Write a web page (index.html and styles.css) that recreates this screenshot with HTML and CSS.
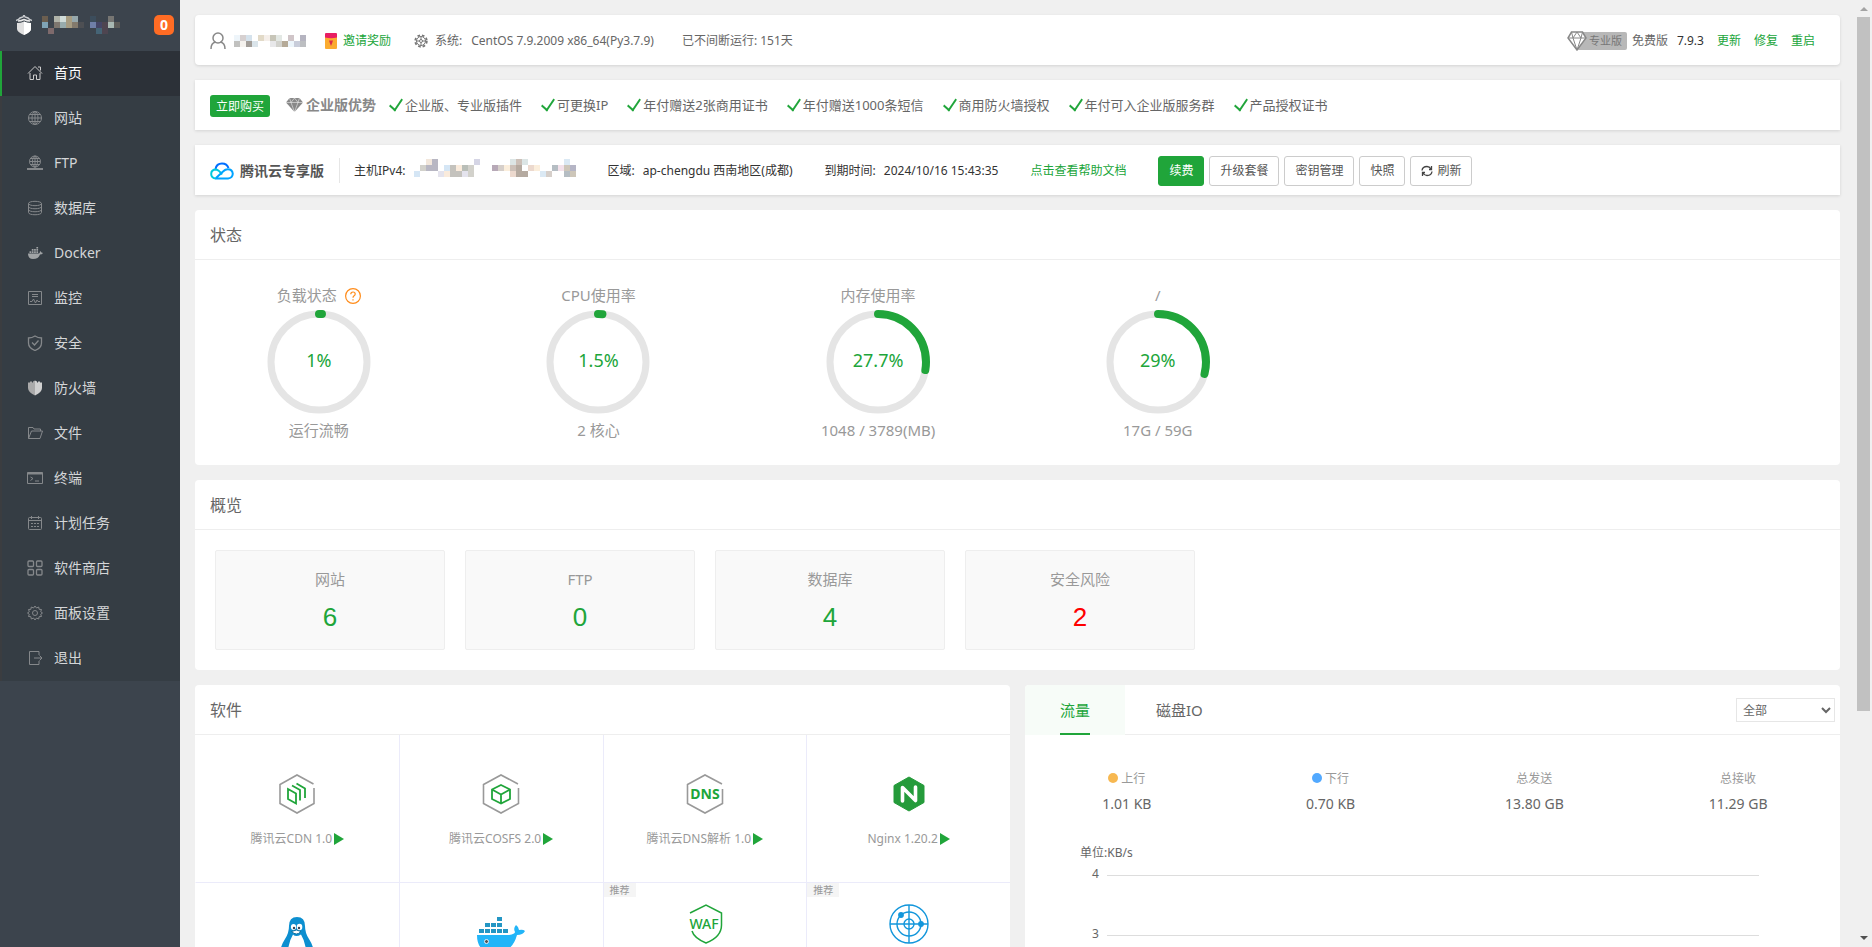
FILE: index.html
```html
<!DOCTYPE html>
<html lang="zh-CN">
  <head>
    <meta charset="utf-8" />
    <meta name="viewport" content="width=device-width, initial-scale=1" />
    <link rel="stylesheet" href="styles.css">
    <title>首页</title>
  </head>
  <body>
    <nav class="sidebar">
      <div class="sidebar-head">
        <svg class="logo" width="16" height="20" viewBox="0 0 16 20">
          <path d="M0 5.500Q3 4.500 4 3L7 2l1-2 1 2 3 1q1 1.500 4 2.500" fill="none" stroke="#c8cbce" stroke-width="1.500" />
          <path d="M2 6Q5 6 8 4.500 11 6 14 6" fill="none" stroke="#e8e8e8" stroke-width="1.500" />
          <path d="M1 8q4 0 7-1.500Q11 8 15 8v6q0 3-7 6-7-3-7-6z" fill="#e0e0e0" />
          <path d="M8 6.500Q11 8 15 8v6q0 3-7 6z" fill="#fff" />
        </svg>
        <svg class="mosaic" width="78" height="18" viewBox="0 0 78 18" shape-rendering="crispEdges">
          <path d="M0 0h6v6H0z" fill="#6b5e4f" />
          <path d="M0 6h6v6H0z" fill="#7fa3b5" />
          <path d="M6 12h6v6H6z" fill="#7e6a6c" />
          <path d="M12 0h6v6h-6z" fill="#b0b3a9" />
          <path d="M18 0h6v6h-6z" fill="#d0dcd9" />
          <path d="M24 0h6v12h-6z" fill="#a69c82" />
          <path d="M30 0h6v6h-6z" fill="#95a7ab" />
          <path d="M12 6h6v6h-6z" fill="#7d766f" />
          <path d="M18 6h6v6h-6z" fill="#98acad" />
          <path d="M30 6h6v6h-6z" fill="#837a6c" />
          <path d="M36 6h6v6h-6z" fill="#4d4f53" />
          <path d="M48 0h6v6h-6z" fill="#3c4d5c" />
          <path d="M48 6h6v6h-6z" fill="#6f7fa8" />
          <path d="M54 6h6v6h-6z" fill="#444566" />
          <path d="M54 12h6v6h-6z" fill="#456476" />
          <path d="M60 6h6v12h-6z" fill="#4e4550" />
          <path d="M66 0h6v6h-6z" fill="#777673" />
          <path d="M66 6h6v6h-6z" fill="#a9b9b3" />
          <path d="M72 6h6v6h-6z" fill="#5d5c59" />
        </svg>
        <span class="msg-count">0</span>
      </div>
      <ul class="menu">
        <li>
          <a class="active" href="#">
            <svg viewBox="0 0 16 16"><path d="M1 8.500 8 1.500l7 7M3 8v6.500h3.500V10h3v4.500H13V8M11 2h2.500v3.500" /></svg>
            首页
          </a>
        </li>
        <li>
          <a href="#">
            <svg viewBox="0 0 16 16"><circle cx="8" cy="8" r="6.500" /><ellipse cx="8" cy="8" rx="3" ry="6.500" /><path d="M8 1.500v13M1.500 8h13M2.500 4.500h11M2.500 11.500h11" /></svg>
            网站
          </a>
        </li>
        <li>
          <a href="#">
            <svg viewBox="0 0 16 16"><circle cx="8" cy="6.500" r="5.500" /><ellipse cx="8" cy="6.500" rx="2.500" ry="5.500" /><path d="M8 1v13M2.500 6.500h11M3.500 3.500h9M3.500 9.500h9" /><path d="M0 14h16M6 14h4" stroke-width="2" /></svg>
            FTP
          </a>
        </li>
        <li>
          <a href="#">
            <svg viewBox="0 0 16 16"><ellipse cx="8" cy="3.500" rx="6.500" ry="2.200" /><path d="M1.500 3.500v9c0 3 13 3 13 0v-9M1.500 6.500c0 3 13 3 13 0M1.500 9.500c0 3 13 3 13 0" /></svg>
            数据库
          </a>
        </li>
        <li>
          <a href="#">
            <svg class="solid" viewBox="0 0 16 16"><path d="M1 8.500h11q1-.500 1-2.500 1.200.500 1.500 1.500 1 0 1.500.500-1 1.500-3 1.500-1.500 4.500-7 4.500Q1 14 1 8.500zM2.500 6.300h1.700V8H2.500zM4.800 6.300h1.700V8H4.800zM7.100 6.300h1.700V8H7.100zM9.400 6.300h1.700V8H9.400zM4.800 4.100h1.700v1.600H4.800zM7.100 4.100h1.700v1.600H7.100zM9.400 4.100h1.700v1.600H9.400zM9.400 2h1.700v1.500H9.400z" /></svg>
            Docker
          </a>
        </li>
        <li>
          <a href="#">
            <svg viewBox="0 0 16 16"><path d="M1.500 1.500h13v13h-13zM5 4.500h6M5 6.500h6M3 11.500h2l1.500-2.500 2 4 1.500-3 1 1.500h2" /></svg>
            监控
          </a>
        </li>
        <li>
          <a href="#">
            <svg viewBox="0 0 16 16"><path d="M8 1q3 2 6.500 2v5q0 5-6.500 7.500Q1.500 13 1.500 8V3Q5 3 8 1zM5 7.500 7.500 10l4-4.500" stroke-width="1.300" /></svg>
            安全
          </a>
        </li>
        <li>
          <a href="#">
            <svg class="solid" viewBox="0 0 16 16"><path d="M1 2.500h2v-1h2v1h1v-1l2-1v15Q1 12 1 8z" fill="#aaa" /><path d="m8 .500 2 1v1h1v-1h2v1h2V8q0 4-7 7.500z" fill="#d0d0d0" /></svg>
            防火墙
          </a>
        </li>
        <li>
          <a href="#">
            <svg viewBox="0 0 16 16"><path d="M1.500 13.500v-11H6l1 1.500h6.500v2M1.500 13.500l3-7.500h11l-2.500 7.500z" /></svg>
            文件
          </a>
        </li>
        <li>
          <a href="#">
            <svg viewBox="0 0 16 16"><path d="M.500 2.500h15v11H.500zM3.500 7l2.500 1.500L3.500 10.500M8 11h4" /><path d="M.500 3.500h15" stroke-width="2" /></svg>
            终端
          </a>
        </li>
        <li>
          <a href="#">
            <svg viewBox="0 0 16 16"><rect x="1.500" y="2.500" width="13" height="12" rx="1" /><path d="M1.500 5.500h13M4.500 1v3M11.500 1v3M4 8.500h2M7 8.500h2M10 8.500h2M4 11.500h2M7 11.500h2M10 11.500h2" /></svg>
            计划任务
          </a>
        </li>
        <li>
          <a href="#">
            <svg viewBox="0 0 16 16" stroke-width="1.300"><rect x="1" y="1" width="5.500" height="5.500" rx="1" /><rect x="9.500" y="1" width="5.500" height="5.500" rx="1" /><rect x="1" y="9.500" width="5.500" height="5.500" rx="1" /><rect x="9.500" y="9.500" width="5.500" height="5.500" rx="1" /></svg>
            软件商店
          </a>
        </li>
        <li>
          <a href="#">
            <svg viewBox="0 0 16 16"><path d="m8 1 1.500 2 2.200-1 .4 2.300 2.400.2-.800 2.200L15.500 8l-1.800 1.300.800 2.200-2.400.2-.4 2.300-2.200-1L8 15l-1.500-2-2.200 1-.4-2.300-2.400-.2.800-2.200L.500 8l1.800-1.300-.800-2.200 2.400-.2L4.300 2l2.200 1z" /><circle cx="8" cy="8" r="2.500" /></svg>
            面板设置
          </a>
        </li>
        <li>
          <a href="#">
            <svg viewBox="0 0 16 16"><path d="M12 5V1.500H2.500v13H12V11M7 8h8M12.500 5.500 15 8l-2.500 2.500" /></svg>
            退出
          </a>
        </li>
      </ul>
    </nav>

    <main class="main">
      <header class="bar bar-info">
        <svg width="16" height="18" viewBox="0 0 16 18" fill="none" stroke="#888" stroke-width="1.500"><circle cx="8" cy="6" r="5" /><path d="M1 17q0-6 4.500-7M15 17q0-6-4.500-7" /></svg>
        <svg class="mosaic-user" width="72" height="12" viewBox="0 0 72 12" shape-rendering="crispEdges">
          <path d="M0 0h6v6H0z" fill="#eef5fa" />
          <path d="M6 0h6v6H6z" fill="#d6d0d0" />
          <path d="M12 0h6v6h-6z" fill="#d5e2ec" />
          <path d="M0 6h6v6H0z" fill="#c1c1bf" />
          <path d="M6 6h6v6H6z" fill="#f5f2ee" />
          <path d="M12 6h6v6h-6z" fill="#a39e99" />
          <path d="M18 6h6v6h-6z" fill="#dae4ea" />
          <path d="M24 0h6v6h-6z" fill="#e2dac8" />
          <path d="M30 0h6v6h-6z" fill="#f5efea" />
          <path d="M36 0h6v6h-6z" fill="#c7c5b8" />
          <path d="M42 0h6v6h-6z" fill="#e3e8e4" />
          <path d="M36 6h6v6h-6z" fill="#e8e8ea" />
          <path d="M42 6h6v6h-6z" fill="#d2d2cd" />
          <path d="M48 6h6v6h-6z" fill="#b5aa98" />
          <path d="M54 0h6v6h-6z" fill="#d0c5c8" />
          <path d="M54 6h6v6h-6z" fill="#ecf5fb" />
          <path d="M60 6h6v6h-6z" fill="#c9cdda" />
          <path d="M66 0h6v6h-6z" fill="#b5b4c0" />
          <path d="M66 6h6v6h-6z" fill="#bcbec1" />
        </svg>
        <a class="invite" href="#">
          <svg width="12" height="16" viewBox="0 0 12 16"><rect width="12" height="15" y="1" rx="1" fill="#fbab30" /><path d="M0 1q0-1 1-1h10q1 0 1 1v3.500Q6 6 0 4.500z" fill="#e81e63" /><path d="M4 7.500h4l-1 3L6 13l-1-2.500z" fill="#dd2c4a" /></svg>
          邀请奖励
        </a>
        <span class="system">
          <svg width="14" height="14" viewBox="0 0 14 14" fill="none" stroke="#777"><circle cx="7" cy="7" r="5.800" stroke-width="1.800" stroke-dasharray="2.600 2" /><circle cx="7" cy="7" r="4.500" /><circle cx="7" cy="7" r="1.500" /><path d="M7 2.500v3M7 8.500v3M2.500 7h3M8.500 7h3" /></svg>
          <span>系统:</span>
        </span>
        <span class="os">CentOS 7.9.2009 x86_64(Py3.7.9)</span>
        <span>已不间断运行: 151天</span>
        <div class="version">
          <a class="pro-badge" href="#">
            <svg width="20" height="20" viewBox="0 0 20 20"><path d="M4.500 1h11L19 7l-9 12L1 7z" fill="#fff" stroke="#888" stroke-width="1.500" /><path d="M1 7h18M6 7l4 12 4-12M4.500 1 6 7l4-6 4 6 1.500-6" fill="none" stroke="#888" /></svg>
            <span>专业版</span>
          </a>
          <span class="free">免费版</span>
          <span class="number">7.9.3</span>
          <a href="#">更新</a>
          <a href="#">修复</a>
          <a href="#">重启</a>
        </div>
      </header>

      <section class="bar bar-promo">
        <button class="buy" type="button">立即购买</button>
        <strong class="promo-title">
          <svg width="17" height="14" viewBox="0 0 17 14"><path d="M3.500 0h10L17 4.500 8.500 14 0 4.500z" fill="#888" /><path d="M0 4.500h17M5 4.500 8.500 14 12 4.500M3.500 0 5 4.500 8.500 0 12 4.500 13.500 0" fill="none" stroke="#fff" stroke-width=".5" /></svg>
          企业版优势
        </strong>
        <ul class="perks">
          <li>企业版、专业版插件</li>
          <li>可更换IP</li>
          <li>年付赠送2张商用证书</li>
          <li>年付赠送1000条短信</li>
          <li>商用防火墙授权</li>
          <li>年付可入企业版服务群</li>
          <li>产品授权证书</li>
        </ul>
      </section>

      <section class="bar bar-cloud">
        <strong class="cloud-name">
          <svg width="24" height="18" viewBox="0 0 24 18" fill="none" stroke-width="2"><path d="M5.500 7q1-5.500 6.500-5.500 5 0 6.500 4.500" stroke="#006eff" /><path d="M12 12.500Q9 8 6 7.500 1.200 7.500 1.200 12q0 4 4.800 4.500" stroke="#00c8dc" /><path d="M5.500 16.500H18q4.500-.500 4.800-4.700-.500-4.500-5-4.500-2.500 0-4.500 2L6 16" stroke="#00a3ff" /></svg>
          腾讯云专享版
        </strong>
        <span class="host">主机IPv4:</span>
        <svg class="mosaic-ip" width="162" height="24" viewBox="0 0 162 24" shape-rendering="crispEdges">
          <path d="M0 12h6v6H0zM30 6h6v6h-6z" fill="#d5e6f5" />
          <path d="M6 6h6v6H6zM54 6h6v12h-6z" fill="#d2d1cb" />
          <path d="M12 0h6v6h-6z" fill="#f2e7dc" />
          <path d="M18 0h6v12h-6zM12 6h6v6h-6z" fill="#b8b7c3" />
          <path d="M24 12h6v6h-6zM48 12h6v6h-6z" fill="#e4e3ed" />
          <path d="M36 6h6v12h-6zM42 12h6v6h-6z" fill="#c4c2bd" />
          <path d="M42 6h6v6h-6zM30 12h6v6h-6z" fill="#faebdc" />
          <path d="M48 6h6v6h-6z" fill="#b9beb8" />
          <path d="M60 0h6v6h-6z" fill="#d5d5e5" />
          <path d="M78 6h6v6h-6z" fill="#b7a9b7" />
          <path d="M84 6h6v6h-6zM132 12h6v6h-6z" fill="#d6cfca" />
          <path d="M90 6h6v6h-6zM120 6h6v6h-6z" fill="#fbeedc" />
          <path d="M96 0h6v6h-6zM108 0h6v6h-6z" fill="#dce5e5" />
          <path d="M102 0h6v6h-6zM96 6h6v6h-6z" fill="#ccc0b8" />
          <path d="M102 6h6v12h-6zM108 12h6v6h-6z" fill="#b5aaa0" />
          <path d="M114 6h6v6h-6zM96 12h6v6h-6z" fill="#ecd9ce" />
          <path d="M126 12h6v6h-6zM150 0h6v6h-6z" fill="#dbe9f4" />
          <path d="M138 6h6v6h-6zM150 12h6v6h-6z" fill="#b5bdc3" />
          <path d="M144 6h6v6h-6z" fill="#f3e1ea" />
          <path d="M150 6h6v6h-6zM156 12h6v6h-6z" fill="#cdc6b9" />
          <path d="M156 6h6v6h-6z" fill="#b5b5c5" />
        </svg>
        <span class="pair"><span>区域:</span><span>ap-chengdu 西南地区(成都)</span></span>
        <span class="pair"><span>到期时间:</span><span>2024/10/16 15:43:35</span></span>
        <a href="#">点击查看帮助文档</a>
        <div class="buttons">
          <button class="btn primary" type="button">续费</button>
          <button class="btn" type="button">升级套餐</button>
          <button class="btn" type="button">密钥管理</button>
          <button class="btn" type="button">快照</button>
          <button class="btn" type="button">
            <svg width="12" height="12" viewBox="0 0 12 12" fill="none" stroke="#444" stroke-width="1.300"><path d="M1 5.500Q1.500 1.500 6 1.500q2.500 0 4 2.500M11 6.500q-.500 4-5 4-2.500 0-4-2.500M10.500 1v3.500H8M1.500 11V7.500H4" /></svg>
            刷新
          </button>
        </div>
      </section>

      <section class="panel">
        <h2>状态</h2>
        <div class="gauges">
          <div class="gauge">
            <h3>负载状态 <svg class="help" width="16" height="16" viewBox="0 0 16 16" fill="none" stroke="#ff8c1a"><circle cx="8" cy="8" r="7.400" stroke-width="1.200" /><path d="M5.800 6.200q0-2.200 2.200-2.200t2.200 2q0 1-1.100 1.700T8 9.800M8 11.200v1.300" stroke-width="1.200" /></svg></h3>
            <div class="ring">
              <svg viewBox="0 0 104 104"><circle class="track" cx="52" cy="52" r="48" /><circle class="value" cx="52" cy="52" r="48" pathLength="100" stroke-dasharray="1 100" /></svg>
              <span>1%</span>
            </div>
            <p>运行流畅</p>
          </div>
          <div class="gauge">
            <h3>CPU使用率</h3>
            <div class="ring">
              <svg viewBox="0 0 104 104"><circle class="track" cx="52" cy="52" r="48" /><circle class="value" cx="52" cy="52" r="48" pathLength="100" stroke-dasharray="1.500 100" /></svg>
              <span>1.5%</span>
            </div>
            <p>2 核心</p>
          </div>
          <div class="gauge">
            <h3>内存使用率</h3>
            <div class="ring">
              <svg viewBox="0 0 104 104"><circle class="track" cx="52" cy="52" r="48" /><circle class="value" cx="52" cy="52" r="48" pathLength="100" stroke-dasharray="27.700 100" /></svg>
              <span>27.7%</span>
            </div>
            <p>1048 / 3789(MB)</p>
          </div>
          <div class="gauge">
            <h3>/</h3>
            <div class="ring">
              <svg viewBox="0 0 104 104"><circle class="track" cx="52" cy="52" r="48" /><circle class="value" cx="52" cy="52" r="48" pathLength="100" stroke-dasharray="29 100" /></svg>
              <span>29%</span>
            </div>
            <p>17G / 59G</p>
          </div>
        </div>
      </section>

      <section class="panel">
        <h2>概览</h2>
        <ul class="overview">
          <li>网站<a href="#">6</a></li>
          <li>FTP<a href="#">0</a></li>
          <li>数据库<a href="#">4</a></li>
          <li>安全风险<a class="danger" href="#">2</a></li>
        </ul>
      </section>

      <div class="columns">
        <section class="panel">
          <h2>软件</h2>
          <ul class="apps">
            <li>
              <div class="app-icon">
                <svg width="38" height="40" viewBox="0 0 38 40" fill="none"><path d="M35.500 10 19 1 2 10.500v19L19 39l17-9.500V14" stroke="#999" stroke-width="1.600" /><path d="m10 15 8 4.500v10L10 25zM14 11.500l8 4.500v10.500M18.500 9.500l8.500 5v9.500" stroke="#20a53a" stroke-width="1.800" /></svg>
              </div>
              <span>腾讯云CDN 1.0<i class="play"></i></span>
            </li>
            <li>
              <div class="app-icon">
                <svg width="38" height="40" viewBox="0 0 38 40" fill="none"><path d="M36 10 19 1 1.500 10.500v19L19 39l17.500-9.500V14" stroke="#999" stroke-width="1.600" /><path d="m19 11 9 4.500v9.500L19 29.500 10 25v-9.500zM10 15.500l9 5 9-5M19 20.500v9" stroke="#20a53a" stroke-width="1.800" /></svg>
              </div>
              <span>腾讯云COSFS 2.0<i class="play"></i></span>
            </li>
            <li>
              <div class="app-icon">
                <svg width="38" height="40" viewBox="0 0 38 40" fill="none"><path d="M36 10 19 1 1.500 10.500v19L19 39l17.500-9.500V15" stroke="#999" stroke-width="1.600" /><text class="icon-text dns" x="19" y="25">DNS</text></svg>
              </div>
              <span>腾讯云DNS解析 1.0<i class="play"></i></span>
            </li>
            <li>
              <div class="app-icon">
                <svg width="32" height="36" viewBox="0 0 32 36"><path d="m16 1 15 8.500v17L16 35 1 26.500v-17z" fill="#259b3b" stroke="#259b3b" stroke-linejoin="round" /><path d="M9.500 25V11.500L22.500 24.500V11" fill="none" stroke="#fff" stroke-width="3.600" stroke-linecap="round" stroke-linejoin="round" /></svg>
              </div>
              <span>Nginx 1.20.2<i class="play"></i></span>
            </li>
            <li>
              <div class="app-icon">
                <svg width="40" height="50" viewBox="0 0 40 50"><path d="M20 0q8 0 8 9 0 7 4 13 6 9 5 20-3 8-17 8T3 42q-1-11 5-20 4-6 4-13 0-9 8-9z" fill="#0d8fd0" /><path d="M16 17.500q3 3 8 0 5 8 6 24-10 9-20 0 1-16 6-24z" fill="#fff" /><ellipse cx="16.500" cy="10" rx="2.600" ry="3" fill="#fff" /><ellipse cx="22.500" cy="10" rx="2.800" ry="3.200" fill="#fff" /><circle cx="17" cy="11" r="1.200" fill="#345" /><circle cx="22" cy="11" r="1.200" fill="#345" /><path d="M14.500 14.500q5-3 9.500 0-4.500 5-9.500 0z" fill="#fff" stroke="#0d6f9f" /></svg>
              </div>
            </li>
            <li>
              <div class="app-icon">
                <svg width="48" height="50" viewBox="0 0 48 50"><path d="M0 18h32q6-1 6-3-2-4 1-7 3 2 3 5 4-1 6 1-2 4-8 4-5 18-22 18Q0 36 0 18z" fill="#22b5f8" /><path d="M2 12h5v4H2zM8 12h5v4H8zM14 12h5v4h-5zM20 12h5v4h-5zM26 12h5v4h-5zM8 6h5v4H8zM14 6h5v4h-5zM20 6h5v4h-5zM20 0h5v4h-5z" fill="#2396c4" /><circle cx="9.500" cy="24.500" r="2" fill="#555" stroke="#dff3fc" /></svg>
              </div>
            </li>
            <li class="tagged">
              <em class="tag">推荐</em>
              <div class="app-icon">
                <svg width="36" height="40" viewBox="0 0 36 40" fill="none"><path d="M3 9 19 1l15.500 8v12Q34.500 33 19 39 7 34 5 27" stroke="#20a53a" stroke-width="1.500" /><text class="icon-text waf" x="17" y="25">WAF</text></svg>
              </div>
            </li>
            <li class="tagged">
              <em class="tag">推荐</em>
              <div class="app-icon">
                <svg width="40" height="40" viewBox="0 0 40 40" fill="none" stroke="#1296db" stroke-width="1.400"><circle cx="20" cy="20" r="19" /><circle cx="20" cy="20" r="12" /><circle cx="20" cy="20" r="5" /><path d="M20 1v38M1 20h38" /><circle cx="12" cy="11" r="2.200" fill="#1296db" /><circle cx="32" cy="20" r="2.200" fill="#1296db" /></svg>
              </div>
            </li>
          </ul>
        </section>

        <section class="panel">
          <div class="tabs">
            <button class="tab active" type="button"><span>流量</span></button>
            <button class="tab" type="button"><span>磁盘IO</span></button>
            <select aria-label="网卡">
              <option>全部</option>
            </select>
          </div>
          <dl class="traffic">
            <div><dt><i class="dot up"></i>上行</dt><dd>1.01 KB</dd></div>
            <div><dt><i class="dot down"></i>下行</dt><dd>0.70 KB</dd></div>
            <div><dt>总发送</dt><dd>13.80 GB</dd></div>
            <div><dt>总接收</dt><dd>11.29 GB</dd></div>
          </dl>
          <div class="chart">
            <p>单位:KB/s</p>
            <ol>
              <li>4</li>
              <li>3</li>
            </ol>
          </div>
        </section>
      </div>
    </main>

    <div class="scrollbar" aria-hidden="true">
      <i class="arrow-up"></i>
      <div class="scroll-track"><div class="thumb"></div></div>
      <i class="arrow-down"></i>
    </div>
  </body>
</html>
```
FILE: styles.css
```css
:root {
  --green: #20a53a;
  --text: #666;
  --muted: #999;
  --line: #eee;
}

* {
  box-sizing: border-box;
}

body {
  background: #f0f0f0;
  color: var(--text);
  display: flex;
  font: 12px/20px "Noto Sans", "Noto Sans CJK SC", sans-serif;
  height: 100vh;
  margin: 0;
  overflow: hidden;
}

h2,
h3,
p,
ul,
ol,
dl,
dd {
  font-weight: normal;
  list-style: none;
  margin: 0;
  padding: 0;
}

a {
  color: var(--green);
  text-decoration: none;
}

svg {
  flex: none;
}

button,
select {
  color: inherit;
  font: inherit;
}

i,
em {
  font-style: normal;
}

/* Sidebar */
.sidebar {
  background: #3c444d;
  flex: none;
  width: 180px;
}

.sidebar-head {
  align-items: center;
  display: flex;
  height: 51px;
  padding: 0 6px 2px 16px;
}

.mosaic {
  margin-left: 10px;
}

.msg-count {
  background: #ff6c24;
  border-radius: 5px;
  color: #fff;
  font-size: 14px;
  font-weight: bold;
  margin-left: auto;
  text-align: center;
  width: 20px;
}

.menu {
  background: #353d44;

  & a {
    align-items: center;
    border-left: 2px solid #3b3d40;
    color: #d4d6d8;
    display: flex;
    font-size: 14px;
    gap: 11px;
    height: 45px;
    padding: 0 0 2px 25px;
  }

  & a.active {
    background: #2c3138;
    border-left-color: var(--green);
    color: #fff;
  }

  & svg {
    fill: none;
    height: 16px;
    stroke: #85888b;
    width: 16px;
  }

  & .active svg {
    stroke: #ccc;
  }

  & svg.solid {
    fill: #a0a3a5;
    stroke: none;
  }
}

/* Top bars */
.main {
  display: flex;
  flex: 1;
  flex-direction: column;
  gap: 15px;
  min-width: 0;
  overflow: hidden;
  padding: 15px 17px 15px 15px;

  & > * {
    flex: none;
  }
}

.bar {
  align-items: center;
  background: #fff;
  box-shadow: 0 1px 3px rgb(0 0 0 / 0.12);
  display: flex;
  height: 50px;
  padding: 0 15px;
  white-space: nowrap;
}

.bar-info {
  border-radius: 4px;
  padding: 2px 25px 0 15px;
}

.mosaic-user {
  margin-left: 8px;
}

.invite {
  align-items: center;
  display: flex;
  gap: 6px;
  margin: 0 23px 0 19px;
}

.system {
  align-items: center;
  display: flex;
  gap: 7px;
  margin-right: 9px;
}

.os {
  margin-right: 28px;
}

.version {
  align-items: center;
  display: flex;
  gap: 13px;
  margin-left: auto;
}

.pro-badge {
  align-items: center;
  color: #777;
  display: flex;
  font-size: 11px;
  margin-right: -8px;

  & svg {
    z-index: 1;
  }

  & span {
    background: #b8b8b8;
    border-radius: 2px;
    line-height: 18px;
    margin-left: -10px;
    padding: 0 5px 0 12px;
  }
}

.free {
  margin-right: -4px;
}

.number {
  color: #333;
}

.buy {
  background: var(--green);
  border: 0;
  border-radius: 3px;
  color: #fff;
  height: 22px;
  margin-top: 2px;
  padding: 1px 6px 0;
}

.promo-title {
  align-items: center;
  color: #888;
  display: flex;
  font-size: 14px;
  gap: 3px;
  margin: 0 13px 0 16px;
}

.perks {
  display: flex;
  font-size: 13px;
  gap: 19px;

  & li {
    align-items: center;
    display: flex;
    gap: 1px;
  }

  & li::before {
    border: solid var(--green);
    border-width: 0 2px 2px 0;
    content: "";
    height: 12px;
    margin: 0 4px 4px 3px;
    transform: rotate(42deg) skewX(8deg);
    width: 6px;
  }
}

.bar-cloud {
  color: #333;
  gap: 32px;
  padding-top: 1px;
}

.cloud-name {
  align-items: center;
  border-right: 1px solid #e6e6e6;
  color: #555;
  display: flex;
  font-size: 14px;
  gap: 6px;
  height: 25px;
  margin-right: -18px;
  padding-right: 15px;
}

.host {
  margin-right: -24px;
}

.pair {
  display: flex;
  gap: 8px;
}

.buttons {
  display: flex;
  gap: 5px;
}

.btn {
  align-items: center;
  background: #fff;
  border: 1px solid #ccc;
  border-radius: 3px;
  color: #555;
  display: flex;
  gap: 4px;
  height: 30px;
  padding: 1px 10px 0;
}

.btn.primary {
  background: var(--green);
  border-color: var(--green);
  color: #fff;
}

/* Panels */
.panel {
  background: #fff;
  border-radius: 4px;

  & h2 {
    border-bottom: 1px solid var(--line);
    font-size: 16px;
    line-height: 47px;
    padding: 2px 15px 0;
  }
}

.gauges {
  display: flex;
  height: 205px;
  padding-top: 24px;
}

/* pulled left, so that the first ring sits closer to the title */
.gauge {
  color: var(--muted);
  font-size: 15px;
  margin: 0 16px 0 -16px;
  text-align: center;
  width: 17%;

  & h3 {
    font-size: 15px;
    line-height: 22px;
  }

  & p {
    line-height: 22px;
    margin-top: 5px;
  }
}

.help {
  margin-left: 4px;
  vertical-align: -3px;
}

.ring {
  color: var(--green);
  display: grid;
  font-size: 18px;
  height: 104px;
  margin: 4px auto 0;
  place-items: center;
  width: 104px;

  & > * {
    grid-area: 1 / 1;
  }

  & span {
    padding-bottom: 4px;
  }

  & circle {
    fill: none;
    stroke-width: 7px;
  }

  & .track {
    stroke: #e5e5e5;
  }

  & .value {
    stroke: var(--green);
    stroke-linecap: round;
    stroke-width: 8px;
    transform: rotate(-90deg);
    transform-origin: center;
  }
}

.overview {
  display: flex;
  gap: 20px;
  padding: 20px;

  & li {
    background: #f9f9f9;
    border: 1px solid var(--line);
    border-radius: 2px;
    color: var(--muted);
    font-size: 15px;
    height: 100px;
    padding-top: 18px;
    text-align: center;
    width: 230px;
  }

  & a {
    display: block;
    font: 26px/36px "Liberation Sans", Arial, sans-serif;
    margin-top: 10px;
  }

  & a.danger {
    color: #f00;
  }
}

.columns {
  display: grid;
  gap: 15px;
  grid-template-columns: 1fr 1fr;
}

.apps {
  color: var(--muted);
  display: grid;
  grid-template-columns: repeat(4, 1fr);

  & li {
    align-items: center;
    border-bottom: 1px solid #ebebfa;
    border-left: 1px solid #ebebfa;
    display: flex;
    flex-direction: column;
    gap: 10px;
    height: 148px;
    padding-top: 34px;
    position: relative;
  }

  & li:nth-child(4n + 1) {
    border-left-color: transparent;
  }

  & li.tagged {
    padding-top: 16px;
  }
}

.app-icon {
  display: grid;
  height: 50px;
  place-items: center;
}

.icon-text {
  fill: var(--green);
  text-anchor: middle;
}

.dns {
  font-size: 14px;
  font-weight: bold;
}

.waf {
  font-size: 14px;
  font-weight: 500;
}

.play {
  border: solid transparent;
  border-left-color: var(--green);
  border-width: 6px 0 6px 10px;
  display: inline-block;
  margin-left: 2px;
  vertical-align: -2px;
}

.tag {
  background: #f5f5f5;
  font-size: 10px;
  left: 0;
  line-height: 14px;
  padding: 0 6px;
  position: absolute;
  top: 0;
}

.tabs {
  align-items: center;
  border-bottom: 1px solid var(--line);
  display: flex;
  height: 50px;
  padding-right: 5px;

  & select {
    background: #fff;
    border: 1px solid #e6e6e6;
    height: 24px;
    margin-left: auto;
    padding: 1px 2px 0;
    width: 99px;
  }
}

.tab {
  background: none;
  border: 0;
  font-size: 15px;
  height: 50px;
  padding: 0 31px;

  & span {
    display: block;
    line-height: 50px;
  }
}

.tab.active {
  background: #f7fcf8;
  border-radius: 4px 0 0;
  color: var(--green);
  padding: 0 35px;

  & span {
    border-bottom: 2px solid var(--green);
    height: 50px;
  }
}

.traffic {
  display: grid;
  grid-template-columns: repeat(4, 1fr);
  padding-top: 34px;
  text-align: center;

  & dt {
    color: var(--muted);
  }

  & dd {
    font-size: 14px;
    margin-top: 5px;
  }
}

.dot {
  border-radius: 50%;
  display: inline-block;
  height: 10px;
  margin-right: 3px;
  width: 10px;
}

.dot.up {
  background: #f7b851;
}

.dot.down {
  background: #52a9ff;
}

.chart {
  padding: 29px 81px 20px 55px;

  & li {
    display: flex;
    gap: 8px;
    height: 60px;
    line-height: 22px;
    padding-left: 12px;
  }

  & li::after {
    border-top: 1px solid #ddd;
    content: "";
    flex: 1;
    margin-top: 12px;
  }
}

/* Page scrollbar */
.scrollbar {
  align-items: center;
  display: flex;
  flex: none;
  flex-direction: column;
  padding-right: 2px;
  width: 15px;
}

.arrow-up,
.arrow-down {
  border: 4px solid transparent;
}

.arrow-up {
  border-bottom-color: #a3a3a3;
  border-top-width: 0;
  margin: 7px 0 6px;
}

.arrow-down {
  border-bottom-width: 0;
  border-top-color: #505050;
  margin: 6px 0 7px;
}

.scroll-track {
  flex: 1;
  width: 13px;
}

.thumb {
  background: #c1c1c1;
  height: 76%;
}
```
